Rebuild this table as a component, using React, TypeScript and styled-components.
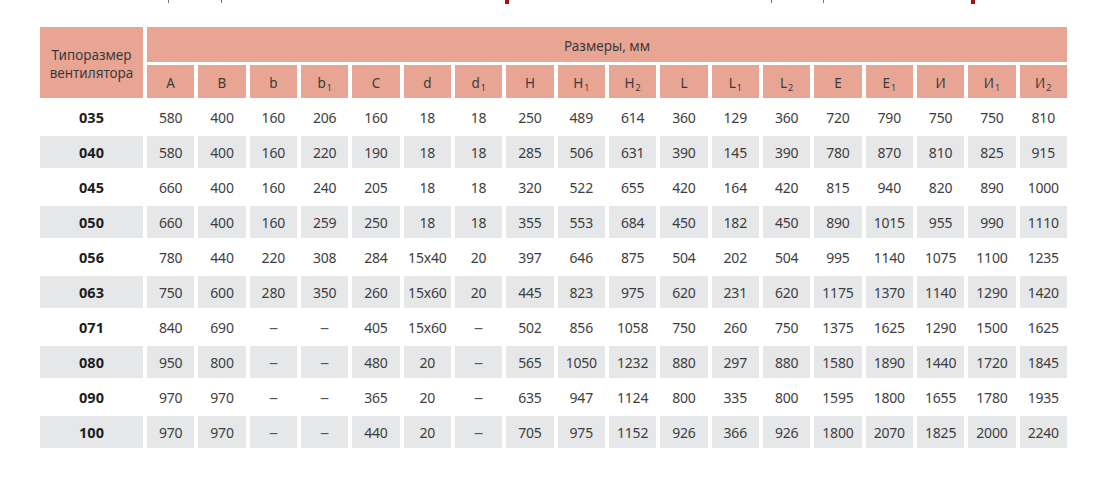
import styled, { createGlobalStyle } from 'styled-components';

const GlobalStyle = createGlobalStyle`
  body {
    margin: 0;
    background: #ffffff;
    font-family: 'Noto Sans', 'Open Sans', sans-serif;
  }
`;

const headers: [string, string?][] = [
  ['A'], ['B'], ['b'], ['b', '1'], ['C'], ['d'], ['d', '1'], ['H'], ['H', '1'], ['H', '2'],
  ['L'], ['L', '1'], ['L', '2'], ['E'], ['E', '1'], ['И'], ['И', '1'], ['И', '2'],
];

const rows: string[][] = [
  ['035', '580', '400', '160', '206', '160', '18', '18', '250', '489', '614', '360', '129', '360', '720', '790', '750', '750', '810'],
  ['040', '580', '400', '160', '220', '190', '18', '18', '285', '506', '631', '390', '145', '390', '780', '870', '810', '825', '915'],
  ['045', '660', '400', '160', '240', '205', '18', '18', '320', '522', '655', '420', '164', '420', '815', '940', '820', '890', '1000'],
  ['050', '660', '400', '160', '259', '250', '18', '18', '355', '553', '684', '450', '182', '450', '890', '1015', '955', '990', '1110'],
  ['056', '780', '440', '220', '308', '284', '15x40', '20', '397', '646', '875', '504', '202', '504', '995', '1140', '1075', '1100', '1235'],
  ['063', '750', '600', '280', '350', '260', '15x60', '20', '445', '823', '975', '620', '231', '620', '1175', '1370', '1140', '1290', '1420'],
  ['071', '840', '690', '–', '–', '405', '15x60', '–', '502', '856', '1058', '750', '260', '750', '1375', '1625', '1290', '1500', '1625'],
  ['080', '950', '800', '–', '–', '480', '20', '–', '565', '1050', '1232', '880', '297', '880', '1580', '1890', '1440', '1720', '1845'],
  ['090', '970', '970', '–', '–', '365', '20', '–', '635', '947', '1124', '800', '335', '800', '1595', '1800', '1655', '1780', '1935'],
  ['100', '970', '970', '–', '–', '440', '20', '–', '705', '975', '1152', '926', '366', '926', '1800', '2070', '1825', '2000', '2240'],
];

// fragments of the line above, cut off by the screenshot edge
const marks: { gap: number; red?: boolean }[] = [
  { gap: 168 }, { gap: 52 }, { gap: 283, red: true }, { gap: 262 }, { gap: 51 }, { gap: 147, red: true },
];

const Strip = styled.div`
  display: flex;
  align-items: flex-start;
  height: 4px;
`;

const Mark = styled.span<{ $gap: number; $red?: boolean }>`
  margin-left: ${({ $gap }) => $gap}px;
  width: ${({ $red }) => ($red ? 4 : 1)}px;
  height: ${({ $red }) => ($red ? 4 : 3)}px;
  background: ${({ $red }) => ($red ? '#a3121a' : '#7a7a7a')};
`;

const Table = styled.table`
  margin: 20px 0 0 36px;
  width: 1035px;
  table-layout: fixed;
  border-collapse: separate;
  border-spacing: 4px 3px;
  color: #3b3b3b;
`;

const HeadCell = styled.th<{ $height: number }>`
  height: ${({ $height }) => $height}px;
  padding: 2px 0 0;
  background: #e9a594;
  font-weight: 400;
  font-size: 13.5px;
  line-height: 18px;
  color: #3a3a3a;
  text-align: center;
`;

const Sub = styled.sub`
  font-size: 9px;
  vertical-align: -3px;
  line-height: 0;
  margin-left: 1px;
`;

const Row = styled.tr<{ $shaded: boolean }>`
  height: 32px;
  & > td {
    background: ${({ $shaded }) => ($shaded ? '#e6e7e8' : 'transparent')};
  }
`;

const Cell = styled.td`
  padding: 0;
  text-align: center;
  font-size: 14px;
  letter-spacing: -0.2px;
  color: #3e3e3e;
  white-space: nowrap;
`;

const Dash = styled.span`
  display: inline-block;
  transform: scaleX(1.3);
  color: #555555;
`;

const SizeCell = styled.td`
  padding: 0;
  text-align: center;
  font-size: 14.5px;
  font-weight: 700;
  color: #1e1e1e;
`;

export default function App() {
  return (
    <>
      <GlobalStyle />
      <Strip>
        {marks.map((m, i) => (
          <Mark key={i} $gap={m.gap} $red={m.red} />
        ))}
      </Strip>
      <Table>
        <colgroup>
          <col style={{ width: 103 }} />
          {headers.map((_, i) => (
            <col key={i} />
          ))}
        </colgroup>
        <thead>
          <tr>
            <HeadCell $height={33} rowSpan={2}>
              Типоразмер
              <br />
              вентилятора
            </HeadCell>
            <HeadCell $height={33} colSpan={18}>
              Размеры, мм
            </HeadCell>
          </tr>
          <tr>
            {headers.map(([label, sub], i) => (
              <HeadCell $height={31} key={i}>
                {label}
                {sub && <Sub>{sub}</Sub>}
              </HeadCell>
            ))}
          </tr>
        </thead>
        <tbody>
          {rows.map((r, i) => (
            <Row key={r[0]} $shaded={i % 2 === 1}>
              <SizeCell>{r[0]}</SizeCell>
              {r.slice(1).map((v, j) => (
                <Cell key={j}>{v === '–' ? <Dash>–</Dash> : v}</Cell>
              ))}
            </Row>
          ))}
        </tbody>
      </Table>
    </>
  );
}
